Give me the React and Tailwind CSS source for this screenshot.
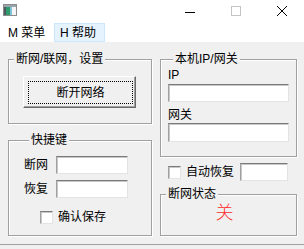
import React from 'react';

const sunken = 'bg-white border border-t-[#7a7a7a] border-l-[#a0a0a0] border-r-[#e3e3e3] border-b-[#e3e3e3] shadow-[inset_1px_1px_0_#c8c8c8]';

const Group = ({ title, className = '', children }) => (
  <div className={`flex flex-col border border-[#a0a0a0] shadow-[inset_1px_1px_0_#fff,1px_1px_0_#fff] ${className}`}>
    <span className="-mt-[8px] ml-[5px] px-[2px] self-start bg-[#f0f0f0] leading-[14px]">{title}</span>
    {children}
  </div>
);

const Check = () => <span className={`w-[13px] h-[13px] shrink-0 ${sunken}`} />;

const App = () => {
  return (
    <div className="w-[304px] h-[249px] bg-[#f0f0f0] flex flex-col overflow-hidden text-[12px] text-black font-['Liberation_Sans','Noto_Sans_CJK_SC',sans-serif]">

      {/* Title bar */}
      <div className="h-[23px] bg-white flex items-start shrink-0">
        <div className="pl-[3px] pt-[4px]">
          <svg width="14" height="12" viewBox="0 0 14 12">
            <rect x="0.5" y="0.5" width="13" height="11" fill="#f4f4f4" stroke="#8c8c8c" />
            <rect x="1" y="1" width="12" height="2" fill="#9aa4ac" />
            <rect x="1" y="3" width="2" height="8" fill="#4d5a63" />
            <rect x="3" y="3" width="4" height="8" fill="#2f9a6a" />
            <rect x="7" y="3" width="2" height="8" fill="#7fc3d8" />
          </svg>
        </div>
        <div className="flex-1" />
        <div className="w-[46px] h-[23px] flex justify-center pt-[6px]">
          <svg width="10" height="10" viewBox="0 0 10 10"><line x1="0" y1="6.5" x2="10" y2="6.5" stroke="#000" /></svg>
        </div>
        <div className="w-[46px] h-[23px] flex justify-center pt-[6px]">
          <svg width="10" height="10" viewBox="0 0 10 10"><rect x="0.5" y="0.5" width="9" height="9" fill="none" stroke="#c4c4c4" /></svg>
        </div>
        <div className="w-[45px] h-[23px] flex justify-center pt-[6px]">
          <svg width="10" height="10" viewBox="0 0 10 10"><path d="M0 0L10 10M10 0L0 10" stroke="#000" strokeWidth="1" /></svg>
        </div>
      </div>

      {/* Menu bar */}
      <div className="h-[19px] bg-white flex items-stretch pl-[2px] shrink-0">
        <div className="w-[52px] px-[6px] flex items-center">M 菜单</div>
        <div className="w-[51px] px-[5px] flex items-center bg-[#e5f3ff] border border-[#cce8ff]">H 帮助</div>
      </div>

      {/* Client area */}
      <div className="h-[203px] shrink-0 flex gap-[8px] pl-[8px] pt-[17px] border-b border-[#a0a0a0]">

        {/* Left column */}
        <div className="w-[144px] flex flex-col">
          <Group title="断网/联网，设置" className="h-[65px]">
            <button className="ml-[14px] mt-[10px] w-[113px] h-[32px] flex bg-[#f0f0f0] border border-t-white border-l-white border-r-[#696969] border-b-[#696969] shadow-[inset_-1px_-1px_0_#a0a0a0]">
              <span className="flex-1 ml-[4px] mt-[4px] mr-[2px] mb-[3px] border border-dotted border-black flex items-center justify-center">断开网络</span>
            </button>
          </Group>

          <Group title="快捷键" className="mt-[16px] h-[96px] px-[15px]">
            <div className="mt-[9px] flex items-center h-[18px]">
              <span className="w-[32px] leading-[14px]">断网</span>
              <span className={`w-[72px] h-[18px] ${sunken}`} />
            </div>
            <div className="mt-[6px] flex items-center h-[18px]">
              <span className="w-[32px] leading-[14px]">恢复</span>
              <span className={`w-[72px] h-[18px] ${sunken}`} />
            </div>
            <div className="mt-[10px] ml-[16px] flex items-center gap-[5px] h-[18px]">
              <Check />
              <span className="leading-[14px]">确认保存</span>
            </div>
          </Group>
        </div>

        {/* Right column */}
        <div className="w-[137px] flex flex-col">
          <Group title="本机IP/网关" className="h-[98px] px-[7px]">
            <span className="mt-[2px] leading-[14px]">IP</span>
            <span className={`mt-[2px] h-[18px] w-[121px] ${sunken}`} />
            <span className="mt-[6px] leading-[14px]">网关</span>
            <span className={`mt-[1px] h-[19px] w-[121px] ${sunken}`} />
          </Group>

          <div className="mt-[6px] h-[18px] pl-[8px] flex items-center">
            <Check />
            <span className="ml-[5px] leading-[14px]">自动恢复</span>
            <span className={`ml-[6px] w-[48px] h-[18px] ${sunken}`} />
          </div>

          <Group title="断网状态" className="mt-[13px] h-[42px]">
            <div className="mt-[1px] pr-[8px] flex justify-center text-[18px] leading-[22px] font-light text-[#ff2a2a]">关</div>
          </Group>
        </div>
      </div>
    </div>
  );
};

export default App;
